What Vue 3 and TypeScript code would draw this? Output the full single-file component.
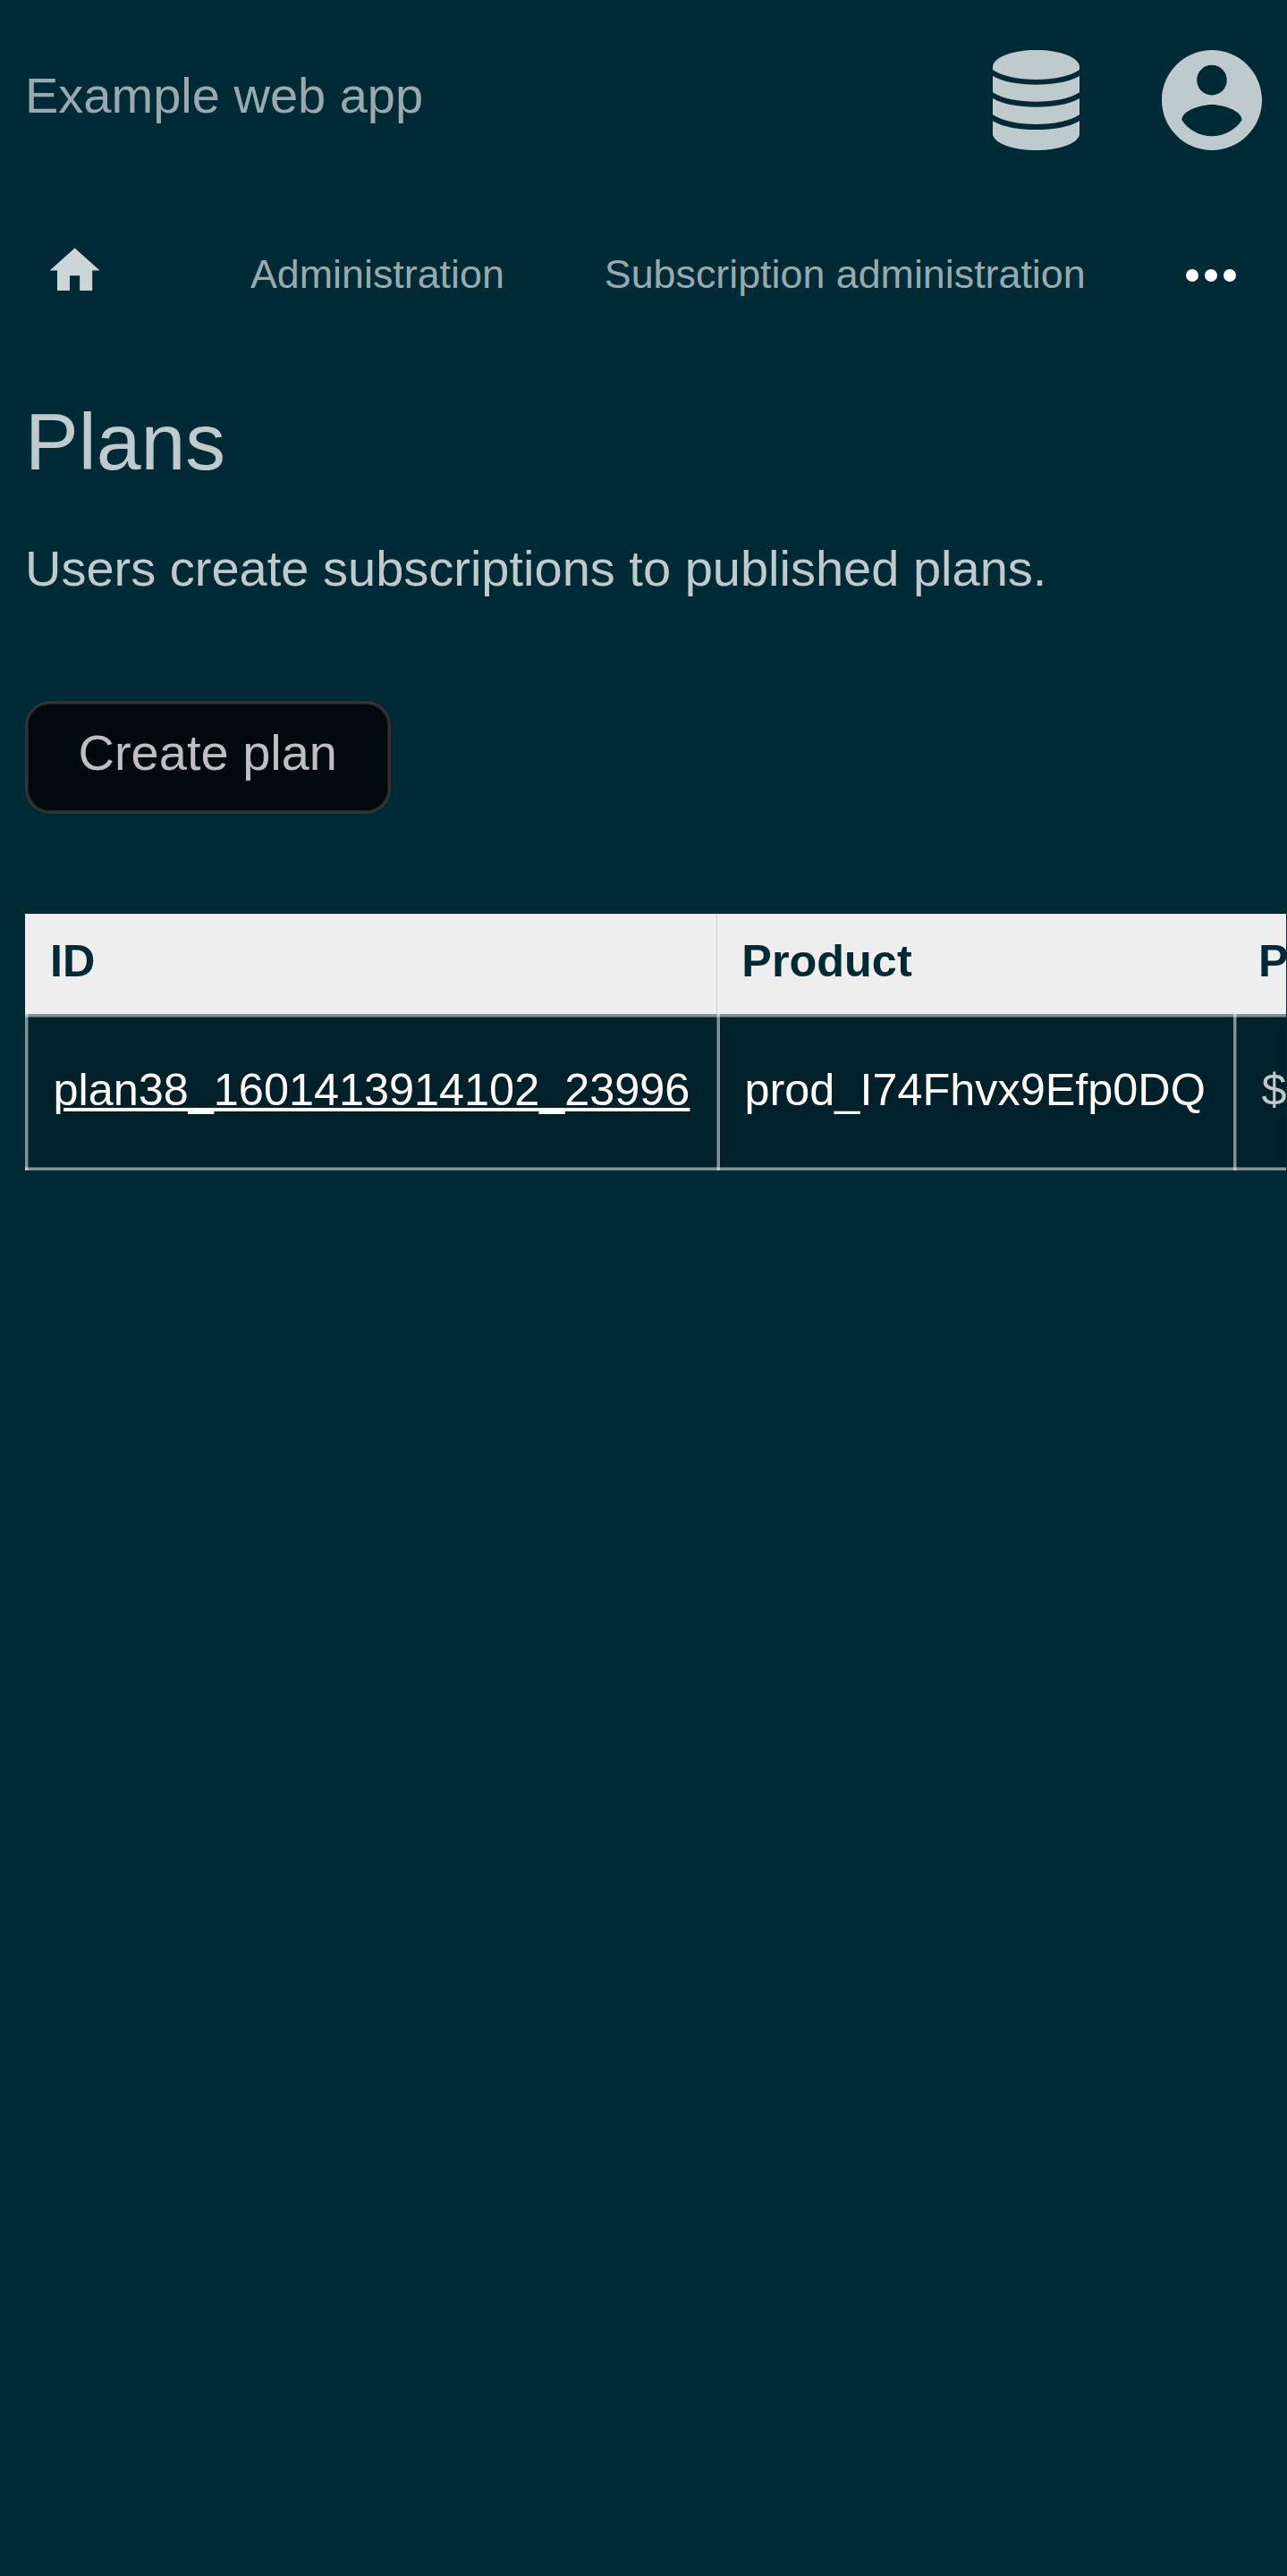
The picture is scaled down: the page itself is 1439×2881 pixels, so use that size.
<script setup lang="ts">
interface Plan {
  id: string
  product: string
  price: string
}

const columns: string[] = ['ID', 'Product', 'Price']
const plans: Plan[] = [
  { id: 'plan38_1601413914102_23996', product: 'prod_I74Fhvx9Efp0DQ', price: '$' },
]
</script>

<template>
  <div class="page">
    <header class="header">
      <a class="brand">Example web app</a>
      <div class="menus">
        <svg class="db" viewBox="0 0 97 112">
          <path d="M0 19C0 8 22 0 48.500 0S97 8 97 19V22C86 29.500 68 33 48.500 33S11 29.500 0 22Z" />
          <path d="M0 29C11 35.500 29 38.700 48.500 38.700S86 35.500 97 29V47.300C86 54.500 68 57.800 48.500 57.800S11 54.500 0 47.300Z" />
          <path d="M0 54C11 60.500 29 63.700 48.500 63.700S86 60.500 97 54V72.300C86 79.500 68 83 48.500 83S11 79.500 0 72.300Z" />
          <path d="M0 79.200C11 86 29 89 48.500 89S86 86 97 79.200V95C94 105 74 112 48.500 112S3 105 0 95Z" />
        </svg>
        <svg class="account" viewBox="2 2 20 20">
          <path d="M12 2C6.480 2 2 6.480 2 12s4.480 10 10 10 10-4.480 10-10S17.520 2 12 2zm0 3c1.660 0 3 1.340 3 3s-1.340 3-3 3-3-1.340-3-3 1.340-3 3-3zm0 14.200c-2.500 0-4.710-1.280-6-3.220.030-1.990 4-3.080 6-3.080 1.990 0 5.970 1.090 6 3.080-1.290 1.940-3.500 3.220-6 3.220z" />
        </svg>
      </div>
    </header>

    <nav class="nav">
      <svg class="home" viewBox="0 0 24 24"><path d="M10 20v-6h4v6h5v-8h3L12 3 2 12h3v8z" /></svg>
      <a class="crumb">Administration</a>
      <a class="crumb second">Subscription administration</a>
      <svg class="more" viewBox="0 0 56 14">
        <circle cx="7" cy="7" r="7" /><circle cx="28" cy="7" r="7" /><circle cx="49" cy="7" r="7" />
      </svg>
    </nav>

    <main>
      <h1>Plans</h1>
      <p>Users create subscriptions to published plans.</p>
      <a class="button">Create plan</a>
      <div class="scroller">
        <div class="row head">
          <div v-for="c in columns" :key="c" class="th">{{ c }}</div>
        </div>
        <div v-for="plan in plans" :key="plan.id" class="row body">
          <div class="td"><a class="link">{{ plan.id }}</a></div>
          <div class="td product">{{ plan.product }}</div>
          <div class="td price">{{ plan.price }}</div>
        </div>
      </div>
    </main>
  </div>
</template>

<style>
body {
  margin: 0;
  background: #002b36;
}
</style>

<style scoped>
.page {
  width: 1439px;
  height: 2881px;
  overflow: hidden;
  background: #002b36;
  color: #bfcacd;
  font-family: "Liberation Sans", Arial, sans-serif;
  font-size: 56px;
}
.header {
  display: flex;
  justify-content: space-between;
  align-items: flex-start;
  height: 224px;
  padding: 0 28.500px 0 28px;
}
.brand {
  margin-top: 75px;
  line-height: 63px;
  color: #99aaaf;
}
.menus {
  display: flex;
  gap: 91.500px;
  margin-top: 56px;
}
.menus svg {
  display: block;
  fill: #bfcacd;
}
.db {
  width: 97px;
  height: 112px;
}
.account {
  width: 112px;
  height: 112px;
}
.nav {
  display: flex;
  align-items: flex-start;
  height: 220px;
  padding-top: 45px;
  padding-left: 50.400px;
  box-sizing: border-box;
  font-size: 44.800px;
}
.home {
  width: 67.200px;
  height: 67.200px;
  fill: #ccd5d7;
}
.crumb {
  margin-top: 12px;
  margin-left: 162.400px;
  line-height: 51px;
  color: #99aaaf;
  white-space: nowrap;
}
.second {
  margin-left: 112px;
}
.more {
  width: 56px;
  height: 14px;
  margin-top: 32px;
  margin-left: 112.300px;
  fill: #fff;
}
h1 {
  margin: 0 28px;
  font-size: 89.600px;
  font-weight: 400;
  line-height: 100px;
}
p {
  margin: 60px 28px 0;
  line-height: 63px;
}
.button {
  display: block;
  box-sizing: border-box;
  width: 409px;
  height: 126px;
  margin: 117px 0 0 28px;
  padding-left: 56.500px;
  border: 3px solid #333;
  border-radius: 28px;
  box-shadow: inset 0 0 0 1px #1a1f20;
  background: #000a0d;
  color: #bfbfc1;
  line-height: 109px;
  white-space: nowrap;
}
.scroller {
  width: 1410px;
  margin: 112px 0 0 28px;
  overflow: hidden;
  font-size: 50.400px;
}
.row {
  display: grid;
  grid-template-columns: 773px 578px 300px;
}
.th {
  height: 112px;
  padding-left: 28px;
  background: #eee;
  box-sizing: border-box;
  color: #002b36;
  font-weight: 700;
  line-height: 105px;
}
.th:nth-child(2) {
  padding-left: 27.300px;
  border-left: 1px solid #ccc;
}
.td {
  --side: linear-gradient(90deg, rgba(255, 255, 255, .5) 3px, rgba(255, 255, 255, .25) 3px 4px, transparent 4px);
  height: 175px;
  padding-left: 31.500px;
  box-sizing: border-box;
  line-height: 169px;
  background:
    var(--side),
    linear-gradient(180deg, rgba(255, 255, 255, .5) 3px, rgba(255, 255, 255, .25) 3px 4px, transparent 4px),
    linear-gradient(0deg, rgba(255, 255, 255, .5) 3px, rgba(255, 255, 255, .25) 3px 4px, transparent 4px),
    #002129;
}
.link {
  color: #fff;
  text-decoration: underline;
  text-decoration-thickness: 3.500px;
  text-underline-offset: 3px;
}
.product {
  --side: linear-gradient(90deg, rgba(255, 255, 255, .25) 1px, rgba(255, 255, 255, .5) 1px 4px, transparent 4px);
  color: #fff;
}
.price {
  color: #bfc7c9;
}
</style>
